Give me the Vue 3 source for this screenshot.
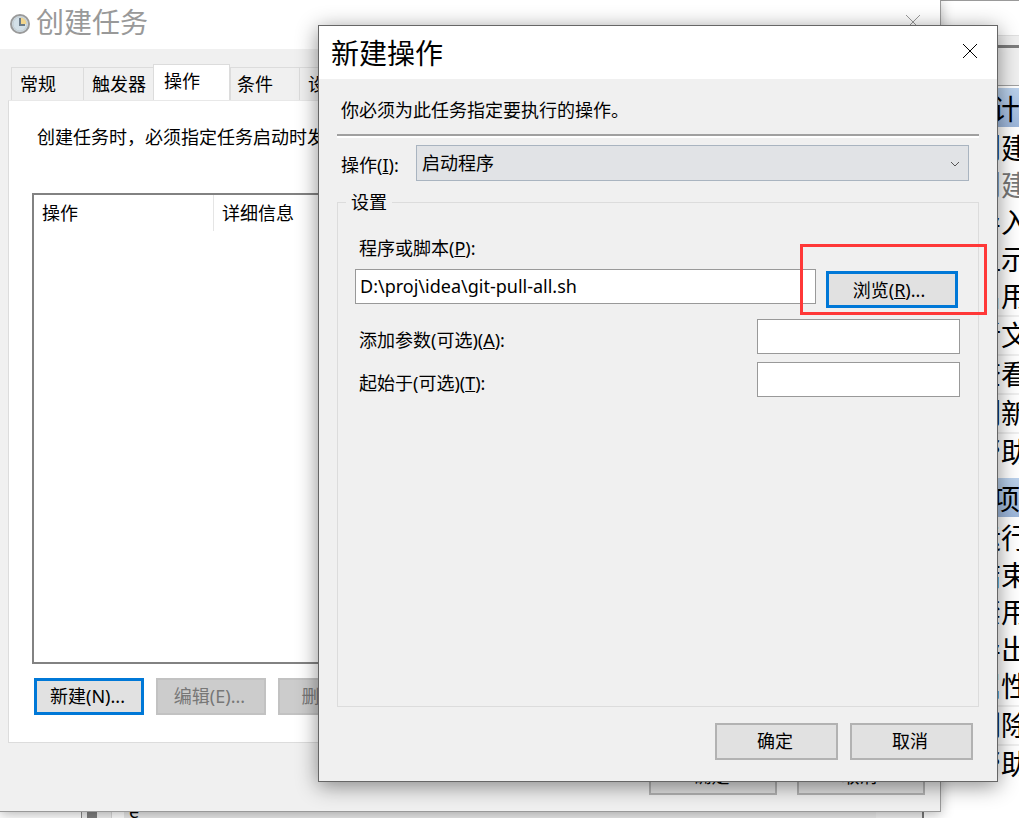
<script setup>
import { ref } from 'vue'

const tabs = ['常规', '触发器', '操作', '条件', '设置']
const program = ref('D:\\proj\\idea\\git-pull-all.sh')
const args = ref('')
const startIn = ref('')
const libraryActions = [
  { text: '创建' },
  { text: '创建', dim: true },
  { text: '导入' },
  { text: '显示' },
  { text: '启用' },
  { text: '新文', line: true },
  { text: '查看', line: true },
  { text: '刷新', line: true },
  { text: '帮助', line: true },
]
const itemActions = [
  { text: '运行' },
  { text: '结束' },
  { text: '禁用' },
  { text: '导出' },
  { text: '属性' },
  { text: '删除', line: true },
  { text: '帮助', line: true },
]
</script>

<template>
  <div class="desktop">
    <div class="console">
      <div class="console-bar"></div>
      <div class="console-main">
        <aside class="actions">
          <div class="actions-top"></div>
          <h2>任务计</h2>
          <ul>
            <li v-for="(a, i) in libraryActions" :key="i" :class="{ dim: a.dim, line: a.line }">{{ a.text }}</li>
          </ul>
          <h2>所选项</h2>
          <ul>
            <li v-for="(a, i) in itemActions" :key="i" :class="{ line: a.line }">{{ a.text }}</li>
          </ul>
        </aside>
      </div>
      <div class="console-foot">
        <span class="foot-tree"></span>
        <span class="foot-thumb"></span>
        <span class="foot-gap"></span>
        <span class="foot-row">e</span>
        <span class="foot-scroll"></span>
        <span class="foot-end"></span>
      </div>
    </div>

    <section class="window task">
      <header class="title">
        <svg class="clock" width="20" height="20" viewBox="0 0 20 20">
          <circle cx="10" cy="10" r="9" fill="#d3e0e8" stroke="#9a9a9a" stroke-width="2" />
          <path d="M10 10V3a7 7 0 0 1 7 7z" fill="#f2d58c" />
          <circle cx="10" cy="10" r="7" fill="none" stroke="#c3cdd3" stroke-width="1" />
          <path d="M10 4v7h5" fill="none" stroke="#6b7b88" stroke-width="2" />
        </svg>
        <h1>创建任务</h1>
        <button class="close" aria-label="关闭">
          <svg width="16" height="16" viewBox="0 0 16 16"><path d="M1 1l14 14M15 1L1 15" /></svg>
        </button>
      </header>
      <div class="task-body">
        <div class="tabs" role="tablist">
          <button v-for="t in tabs" :key="t" role="tab" :class="{ active: t === '操作' }">{{ t }}</button>
        </div>
        <div class="panel">
          <p>创建任务时，必须指定任务启动时发</p>
          <table class="list">
            <thead>
              <tr><th class="c1">操作</th><th>详细信息</th></tr>
            </thead>
            <tbody><tr><td></td><td></td></tr></tbody>
          </table>
          <div class="panel-buttons">
            <button class="btn focus">新建(N)...</button>
            <button class="btn" disabled>编辑(E)...</button>
            <button class="btn" disabled>删除(D)</button>
          </div>
        </div>
        <div class="task-footer">
          <button class="btn">确定</button>
          <button class="btn">取消</button>
        </div>
      </div>
    </section>

    <section class="window dialog">
      <header class="title">
        <h1>新建操作</h1>
        <button class="close" aria-label="关闭">
          <svg width="16" height="16" viewBox="0 0 16 16"><path d="M1 1l14 14M15 1L1 15" /></svg>
        </button>
      </header>
      <div class="dialog-body">
        <p class="hint">你必须为此任务指定要执行的操作。</p>
        <div class="kind">
          <label for="kind">操作(<u>I</u>):</label>
          <div class="select">
            <select id="kind"><option>启动程序</option></select>
            <svg width="10" height="6" viewBox="0 0 10 6"><path d="M1 1l4 4 4-4" /></svg>
          </div>
        </div>
        <fieldset>
          <legend>设置</legend>
          <label class="program-label" for="program">程序或脚本(<u>P</u>):</label>
          <div class="program">
            <input id="program" v-model="program" type="text" />
            <div class="browse">
              <button class="btn focus">浏览(<u>R</u>)...</button>
              <span class="marker"></span>
            </div>
          </div>
          <div class="field">
            <label for="args">添加参数(可选)(<u>A</u>):</label>
            <input id="args" v-model="args" type="text" />
          </div>
          <div class="field">
            <label for="start">起始于(可选)(<u>T</u>):</label>
            <input id="start" v-model="startIn" type="text" />
          </div>
        </fieldset>
        <div class="dialog-footer">
          <button class="btn">确定</button>
          <button class="btn">取消</button>
        </div>
      </div>
    </section>
  </div>
</template>

<style>
body {
  margin: 0;
  overflow: hidden;
}
</style>

<style scoped>
* {
  box-sizing: border-box;
}
.desktop {
  position: relative;
  height: 100vh;
  overflow: hidden;
  background: #fff;
  color: #000;
  font: 18px/24px "Noto Sans", "Noto Sans CJK SC", sans-serif;
}
h1, h2, p, ul {
  margin: 0;
  padding: 0;
  font-weight: 400;
}
button, input, select {
  font: inherit;
  color: inherit;
  border-radius: 0;
}

.console {
  display: flex;
  flex-direction: column;
  height: 100%;
}
.console-bar {
  height: 48px;
  border-top: 1px solid #9a9a9a;
  border-bottom: 3px solid #7c7c7c;
  background: linear-gradient(#fff 34px, #e0e0e0 34px, #e0e0e0 35px, #f0f0f0 35px);
}
.console-main {
  flex: 1;
  min-height: 0;
  display: flex;
  justify-content: flex-end;
}
.actions {
  width: 83px;
  overflow: hidden;
  white-space: nowrap;
  font-size: 28px;
}
.actions-top {
  height: 38px;
  margin-bottom: 2px;
  background: #f0f0f0;
  border-bottom: 1px solid #a0a0a0;
}
.actions h2 {
  padding-top: 4px;
  font-size: 28px;
  line-height: 35px;
  background: linear-gradient(#bad1ec, #9cb6da);
}
.actions ul {
  list-style: none;
  padding: 3px 0 7px;
}
.actions li {
  padding-left: 37px;
  line-height: 37px;
}
.actions li.line {
  border-top: 2px solid #efefef;
}
.actions li.dim {
  color: #777;
}
.console-foot {
  display: flex;
  height: 7px;
  overflow: hidden;
}
.foot-tree {
  width: 82px;
  border-right: 1px solid #8a8a8a;
}
.foot-thumb {
  width: 15px;
  border-left: 5px solid #f0f0f0;
  background: #7f7f7f;
}
.foot-gap {
  width: 27px;
  background: linear-gradient(90deg, #f0f0f0 14px, #d8d8d8 14px, #d8d8d8 15px, #fff 15px);
}
.foot-row {
  flex: 1;
  display: flex;
  align-items: flex-end;
  padding-left: 5px;
  background: #e9e9e9;
  line-height: 14px;
}
.foot-scroll {
  width: 48px;
  background: #f0f0f0;
  border-right: 2px solid #777;
}
.foot-end {
  width: 95px;
}

.window {
  position: absolute;
  display: flex;
  flex-direction: column;
  background: #f0f0f0;
}
.title {
  display: flex;
  align-items: center;
  background: #fff;
}
.title h1 {
  font-size: 28px;
  line-height: 36px;
}
.close {
  margin-left: auto;
  padding: 0;
  border: 0;
  background: none;
  display: flex;
}
.close svg {
  fill: none;
  stroke: #000;
  stroke-width: 1;
}

.task {
  left: 0;
  top: 0;
  right: 78px;
  bottom: 6px;
  border-right: 1px solid #999;
  border-bottom: 1px solid #999;
  box-shadow: 0 2px 12px rgba(0, 0, 0, 0.3);
}
.task .title {
  height: 49px;
  padding: 0 19px 6px 10px;
  color: #999;
}
.clock {
  margin-top: 4px;
}
.task .title h1 {
  padding-left: 6px;
}
.task .close svg {
  stroke: #999;
}
.task-body {
  flex: 1;
  display: flex;
  flex-direction: column;
  padding: 15px 8px 16px;
}
.tabs {
  display: flex;
  align-items: flex-end;
  padding-left: 3px;
}
.tabs button {
  height: 33px;
  padding: 0 13px 1px 8px;
  border: 1px solid #dcdcdc;
  border-right: 0;
  border-bottom: 0;
  background: #f0f0f0;
}
.tabs button:first-child {
  padding-right: 27px;
}
.tabs button:nth-child(2) {
  padding-right: 7px;
}
.tabs button:nth-child(4) {
  padding: 0 26px 1px 6px;
}
.tabs button.active {
  height: 36px;
  padding: 0 29px 4px 10px;
  border-right: 1px solid #dcdcdc;
  background: #fff;
}
.panel {
  flex: 1;
  display: flex;
  flex-direction: column;
  padding: 24px 24px 27px 23px;
  border: 1px solid #dcdcdc;
  border-top-color: #e8e8e8;
  background: #fff;
}
.panel p {
  padding-left: 5px;
}
.list {
  flex: 1;
  display: flex;
  flex-direction: column;
  margin: 44px 0 14px;
  border: 2px solid #828282;
  border-spacing: 0;
}
.list tr {
  display: flex;
}
.list th {
  height: 36px;
  padding: 6px 8px;
  font-weight: 400;
  text-align: left;
}
.list .c1 {
  width: 180px;
  border-right: 1px solid #e5e5e5;
}
.panel-buttons {
  display: flex;
  gap: 12px;
  padding-left: 2px;
}
.btn {
  height: 37px;
  padding: 0 3px 2px 0;
  border: 2px solid #b2b2b2;
  background: #e1e1e1;
}
.btn:disabled {
  border-color: #c2c2c2;
  background: #ccc;
  color: #777;
}
.btn.focus {
  border: 3px solid #0078d7;
}
.panel-buttons .btn {
  width: 110px;
}
.task-footer {
  display: flex;
  justify-content: flex-end;
  gap: 20px;
  padding: 15px 7px 0 0;
}
.task-footer .btn {
  width: 128px;
}

.dialog {
  left: 318px;
  top: 25px;
  right: 21px;
  bottom: 36px;
  border: 1px solid #666;
  box-shadow: 0 4px 20px rgba(0, 0, 0, 0.45);
}
.dialog .title {
  height: 53px;
  padding: 0 19px 0 12px;
}
.dialog .close {
  margin-bottom: 4px;
}
.dialog-body {
  flex: 1;
  display: flex;
  flex-direction: column;
  padding: 19px 18px 21px;
}
.hint {
  padding: 0 4px 12px;
  border-bottom: 2px solid #a0a0a0;
  box-shadow: 0 2px 0 #fff;
}
.kind {
  display: flex;
  align-items: center;
  padding: 9px 10px 0 4px;
}
.kind label {
  width: 75px;
  padding-top: 4px;
}
.select {
  flex: 1;
  position: relative;
}
.select select {
  display: block;
  width: 100%;
  height: 36px;
  padding: 0 5px;
  border: 1px solid #a9b4c0;
  background: #e1e3e6;
  appearance: none;
}
.select svg {
  position: absolute;
  right: 9px;
  top: 16px;
  fill: none;
  stroke: #555;
  stroke-width: 1;
  pointer-events: none;
}
fieldset {
  flex: 1;
  min-width: 0;
  margin: 9px 0 0;
  padding: 21px 18px 0 17px;
  border: 1px solid #dcdcdc;
}
legend {
  margin-left: -9px;
  padding: 0 5px;
}
.program-label {
  display: block;
  padding: 1px 4px 9px;
}
.program {
  display: flex;
  gap: 10px;
  align-items: flex-start;
  margin-bottom: 11px;
}
input {
  height: 35px;
  padding: 0 4px 2px;
  border: 1px solid #999;
  background: #fff;
}
.program input {
  flex: 1;
  min-width: 0;
}
.browse {
  position: relative;
  padding: 2px 2px 0 0;
}
.browse .btn {
  width: 132px;
  padding: 0 6px 0 0;
}
.marker {
  position: absolute;
  left: -26px;
  right: -27px;
  top: -25px;
  bottom: -7px;
  border: 3px solid #ff3838;
  pointer-events: none;
}
.field {
  display: flex;
  justify-content: space-between;
  align-items: center;
  padding-left: 4px;
  margin-bottom: 8px;
}
.field input {
  width: 203px;
}
.field label {
  padding-top: 6px;
}
.dialog-footer {
  display: flex;
  justify-content: flex-end;
  gap: 12px;
  padding: 16px 6px 0 0;
}
.dialog-footer .btn {
  width: 123px;
}
</style>
